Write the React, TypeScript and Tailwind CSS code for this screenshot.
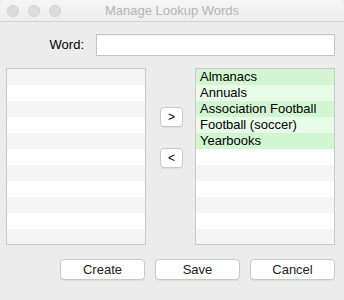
import React from 'react'

const words = ['Almanacs', 'Annuals', 'Association Football', 'Football (soccer)', 'Yearbooks']
const rows = Array.from({ length: 11 }, (_, i) => i)

function ListBox({ items, selected }: { items: string[]; selected?: boolean }) {
  return (
    <div className="w-[140px] shrink-0 h-[177px] border border-[#c8c8c8] bg-white overflow-hidden">
      {rows.map((i) => {
        const text = items[i]
        const bg = text && selected
          ? i % 2 === 0 ? 'bg-[#d2f6d2]' : 'bg-[#e9fbe9]'
          : i % 2 === 0 ? 'bg-[#f5f5f5]' : 'bg-white'
        return (
          <div key={i} className={`h-[16px] pl-[4px] text-[13px] leading-[16px] text-black ${bg}`}>
            {text}
          </div>
        )
      })}
    </div>
  )
}

function SmallButton({ label }: { label: string }) {
  return (
    <div className="w-[23px] h-[20px] rounded-[4px] border border-[#c8c8c8] bg-white shadow-[0_1px_0_rgba(0,0,0,0.06)] flex items-center justify-center text-[12px] text-black">
      {label}
    </div>
  )
}

function PushButton({ label }: { label: string }) {
  return (
    <div className="w-[85px] h-[21px] rounded-[4px] border border-[#c8c8c8] bg-white shadow-[0_1px_0_rgba(0,0,0,0.06)] flex items-center justify-center text-[13px] text-[#222]">
      {label}
    </div>
  )
}

export default function App() {
  return (
    <div className="w-[344px] h-[300px] bg-[#ececec] flex flex-col font-['Liberation_Sans',Arial,sans-serif] select-none">
      {/* Title bar */}
      <div className="relative h-[22px] bg-gradient-to-b from-[#f6f6f6] to-[#ececec] border-b border-[#d2d2d2] flex items-center justify-center rounded-t-[5px]">
        <div className="absolute left-[7px] top-[5px] flex gap-[9px]">
          <span className="w-[12px] h-[12px] rounded-full bg-[#dcdcdc] border border-[#d0d0d0]" />
          <span className="w-[12px] h-[12px] rounded-full bg-[#dcdcdc] border border-[#d0d0d0]" />
          <span className="w-[12px] h-[12px] rounded-full bg-[#dcdcdc] border border-[#d0d0d0]" />
        </div>
        <span className="text-[13px] text-[#b4b4b4]">Manage Lookup Words</span>
      </div>

      <div className="flex flex-col pl-[6px] pr-[9px]">
        {/* Word row */}
        <div className="flex items-center mt-[12px] h-[22px]">
          <span className="w-[78px] text-right text-[13px] text-black">Word:</span>
          <div className="ml-[12px] flex-1 h-[22px] bg-white border border-[#c4c4c4] shadow-[inset_0_1px_0_rgba(0,0,0,0.04)]" />
        </div>

        {/* Lists */}
        <div className="flex mt-[12px]">
          <ListBox items={[]} />
          <div className="w-[49px] shrink-0 flex flex-col pl-[14px] pt-[39px] gap-[21px]">
            <SmallButton label=">" />
            <SmallButton label="<" />
          </div>
          <ListBox items={words} selected />
        </div>

        {/* Buttons */}
        <div className="flex justify-end gap-[10px] mt-[14px]">
          <PushButton label="Create" />
          <PushButton label="Save" />
          <PushButton label="Cancel" />
        </div>
      </div>
    </div>
  )
}
